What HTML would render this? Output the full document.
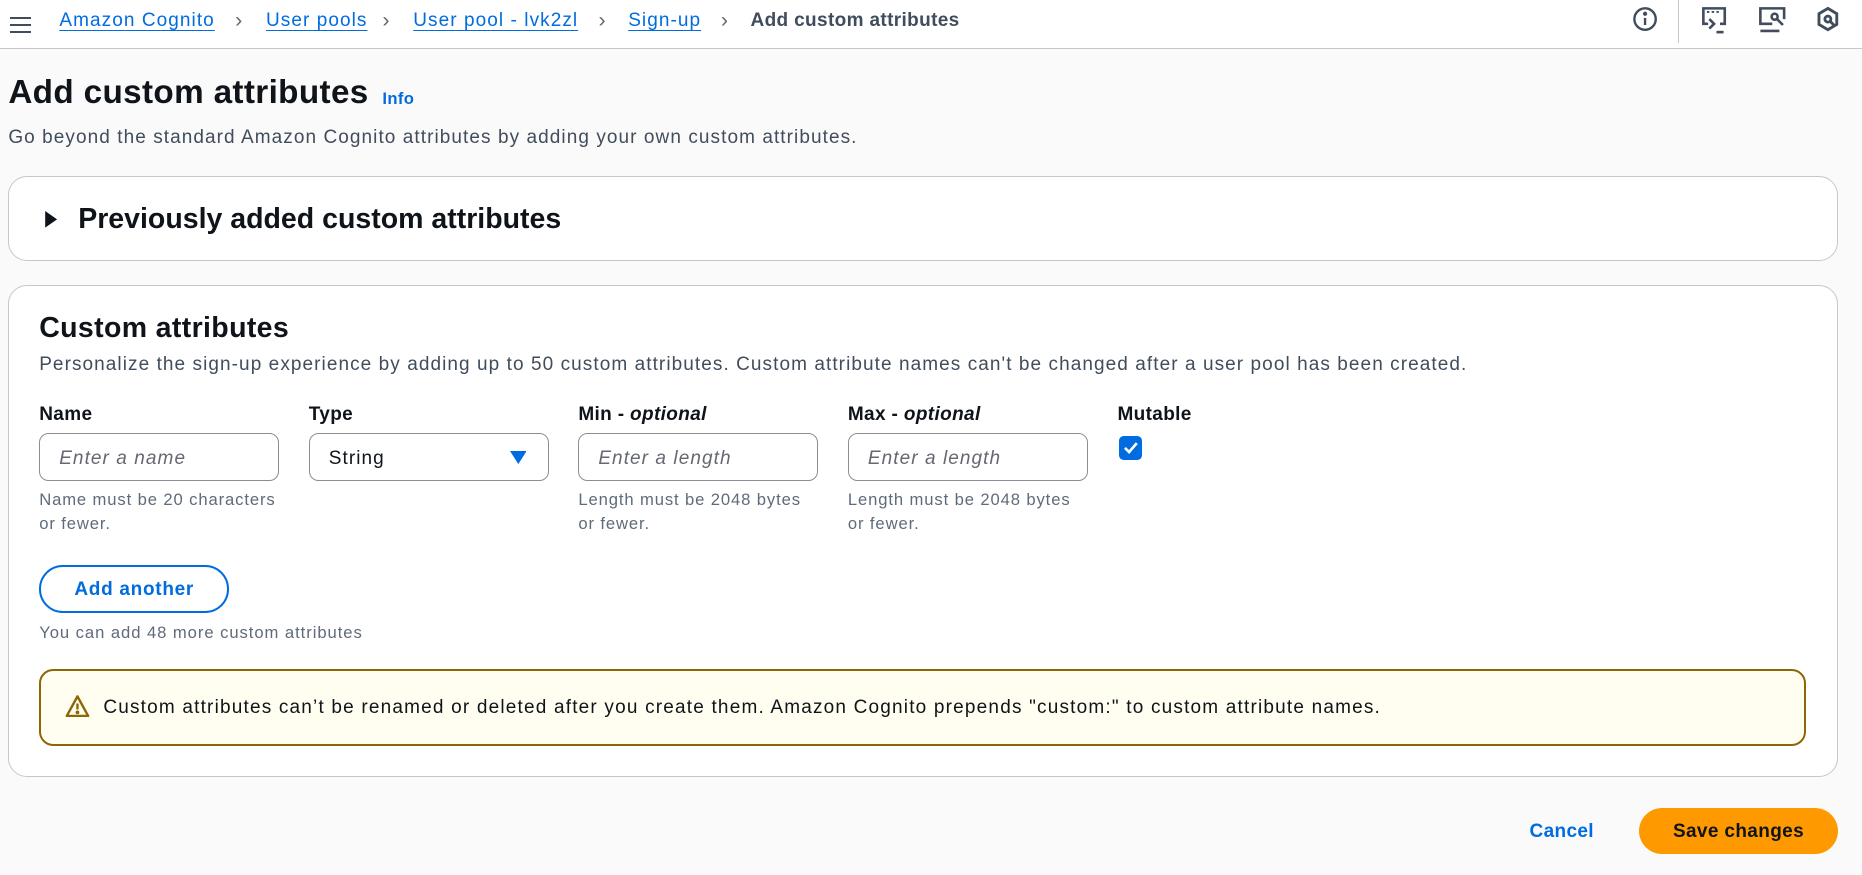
<!DOCTYPE html>
<html><head><meta charset="utf-8"><style>
*{box-sizing:border-box;margin:0;padding:0}
html,body{width:1862px;height:875px;overflow:hidden}
body{background:#fafafa;font-family:"Liberation Sans",Arial,sans-serif;color:#0f141a}
#w{zoom:1.1875;width:1568px;height:737px;position:relative;letter-spacing:0.9px}
.a{position:absolute;white-space:nowrap}
.b{letter-spacing:0.3px}
.top{position:absolute;left:0;top:0;width:1568px;height:41px;background:#fff;border-bottom:1px solid #c6c6cd}
.bc{color:#006ce0;text-decoration:underline;text-underline-offset:3px;font-size:16px}
.chev{color:#656871;font-size:18px}
.panel{position:absolute;background:#fff;border:1px solid #c6c6cd;border-radius:16px}
.lbl{font-weight:bold;font-size:16px;letter-spacing:0.3px}
.inp{position:absolute;top:365px;width:202px;height:40px;border:1px solid #8c8c94;border-radius:8px;font-size:16px;padding:11px 16px;color:#656871;font-style:italic;background:#fff}
.help{font-size:14px;color:#5f6b7a;line-height:20px;top:411px;letter-spacing:0.75px}
</style></head><body><div id="w">
<div class="top">
 <div class="a" style="left:8px;top:12px;width:18px">
  <div style="height:2px;background:#414d5c;margin:2px 0 4px"></div><div style="height:2px;background:#414d5c;margin-bottom:4px"></div><div style="height:2px;background:#414d5c"></div></div>
 <span class="a bc" style="left:50px;top:8px">Amazon Cognito</span>
 <span class="a chev" style="left:198px;top:7px">&#x203A;</span>
 <span class="a bc" style="left:224px;top:8px">User pools</span>
 <span class="a chev" style="left:322px;top:7px">&#x203A;</span>
 <span class="a bc" style="left:348px;top:8px">User pool - lvk2zl</span>
 <span class="a chev" style="left:504px;top:7px">&#x203A;</span>
 <span class="a bc" style="left:529px;top:8px">Sign-up</span>
 <span class="a chev" style="left:607px;top:7px">&#x203A;</span>
 <span class="a b" style="left:632px;top:8px;font-size:16px;font-weight:bold;color:#414d5c">Add custom attributes</span>
 <svg class="a" style="left:1374px;top:5px" width="22" height="22" viewBox="0 0 22 22" fill="none" stroke="#414d5c" stroke-width="2"><circle cx="11" cy="11" r="9"/><line x1="11" y1="10" x2="11" y2="16"/><circle cx="11" cy="6.5" r="0.8" fill="#414d5c"/></svg>
 <div class="a" style="left:1413px;top:0;width:1px;height:36px;background:#c6c6cd"></div>
 <svg class="a" style="left:1432px;top:5px" width="22" height="24" viewBox="0 0 22 24" fill="none" stroke="#414d5c" stroke-width="2.2"><path d="M6 15H2V2h18v13h-4"/><path d="M5 5h2M9 5h2M13 5h2" stroke-width="1.6"/><path d="M7 11l4 4-4 4"/><path d="M13 22h6"/></svg>
 <svg class="a" style="left:1480px;top:5px" width="24" height="24" viewBox="0 0 24 24" fill="none" stroke="#414d5c" stroke-width="2.2"><path d="M12 15H2V2h20v9"/><path d="M2 21h16"/><circle cx="14" cy="9" r="2.5"/><path d="M16 11l5 5"/></svg>
 <svg class="a" style="left:1529px;top:5px" width="20" height="22" viewBox="0 0 20 22" fill="none" stroke="#414d5c" stroke-width="2.4"><path d="M10 2l7.5 4.5v9L10 20l-7.5-4.5v-9z"/><circle cx="10" cy="11" r="2.5"/><path d="M12 13l3 3"/></svg>
</div>
<div class="a b" style="left:7px;top:62px;font-size:28px;font-weight:bold">Add custom attributes</div>
<div class="a b" style="left:322px;top:75px;font-size:14px;font-weight:bold;color:#006ce0">Info</div>
<div class="a" style="left:7px;top:107px;font-size:16px;color:#414d5c">Go beyond the standard Amazon Cognito attributes by adding your own custom attributes.</div>
<div class="panel" style="left:7px;top:148px;width:1541px;height:72px">
 <svg class="a" style="left:29px;top:29px" width="12" height="14"><path d="M1 0L11 7L1 14z" fill="#0f141a"/></svg>
 <div class="a" style="left:58px;top:22px;font-size:24px;font-weight:bold;letter-spacing:0">Previously added custom attributes</div>
</div>
<div class="panel" style="left:7px;top:240px;width:1541px;height:414px"></div>
<div class="a b" style="left:33px;top:263px;font-size:24px;font-weight:bold">Custom attributes</div>
<div class="a" style="left:33px;top:298px;font-size:16px;color:#414d5c">Personalize the sign-up experience by adding up to 50 custom attributes. Custom attribute names can't be changed after a user pool has been created.</div>
<div class="a lbl" style="left:33px;top:340px">Name</div>
<div class="a lbl" style="left:260px;top:340px">Type</div>
<div class="a lbl" style="left:487px;top:340px">Min - <i>optional</i></div>
<div class="a lbl" style="left:714px;top:340px">Max - <i>optional</i></div>
<div class="a lbl" style="left:941px;top:340px">Mutable</div>
<div class="inp" style="left:33px">Enter a name</div>
<div class="inp" style="left:260px;font-style:normal;color:#0f141a">String<svg style="position:absolute;right:18px;top:14px" width="14" height="11"><path d="M0 0h14L7 11z" fill="#006ce0"/></svg></div>
<div class="inp" style="left:487px">Enter a length</div>
<div class="inp" style="left:714px">Enter a length</div>
<div class="a" style="left:942px;top:367px;width:20px;height:20px;background:#006ce0;border-radius:4px"><svg width="20" height="20"><path d="M5 10l3.5 3.5L15 6" stroke="#fff" stroke-width="2.2" fill="none"/></svg></div>
<div class="a help" style="left:33px">Name must be 20 characters<br>or fewer.</div>
<div class="a help" style="left:487px">Length must be 2048 bytes<br>or fewer.</div>
<div class="a help" style="left:714px">Length must be 2048 bytes<br>or fewer.</div>
<div class="a b" style="left:33px;top:476px;width:160px;height:40px;border:2px solid #006ce0;border-radius:20px;color:#006ce0;font-weight:bold;font-size:16px;text-align:center;line-height:38px;letter-spacing:0.6px">Add another</div>
<div class="a" style="left:33px;top:525px;font-size:14px;color:#5f6b7a;letter-spacing:0.8px">You can add 48 more custom attributes</div>
<div class="a" style="left:33px;top:563px;width:1488px;height:65px;border:2px solid #8d6605;border-radius:12px;background:#fffef0"></div>
<svg class="a" style="left:55px;top:584px" width="21" height="20" viewBox="0 0 21 20" fill="none" stroke="#8d6605" stroke-width="2"><path d="M10.5 2L19.5 18.5h-18z" stroke-linejoin="round"/><path d="M10.5 8v5"/><circle cx="10.5" cy="15.5" r="0.6" fill="#8d6605"/></svg>
<div class="a" style="left:87px;top:587px;font-size:16px;letter-spacing:1px">Custom attributes can’t be renamed or deleted after you create them. Amazon Cognito prepends "custom:" to custom attribute names.</div>
<div class="a b" style="left:1288px;top:691px;font-size:16px;font-weight:bold;color:#006ce0">Cancel</div>
<div class="a b" style="left:1380px;top:680px;width:168px;height:39px;background:#ff9900;border-radius:20px;font-weight:bold;font-size:16px;text-align:center;line-height:41px">Save changes</div>
</div></body></html>
